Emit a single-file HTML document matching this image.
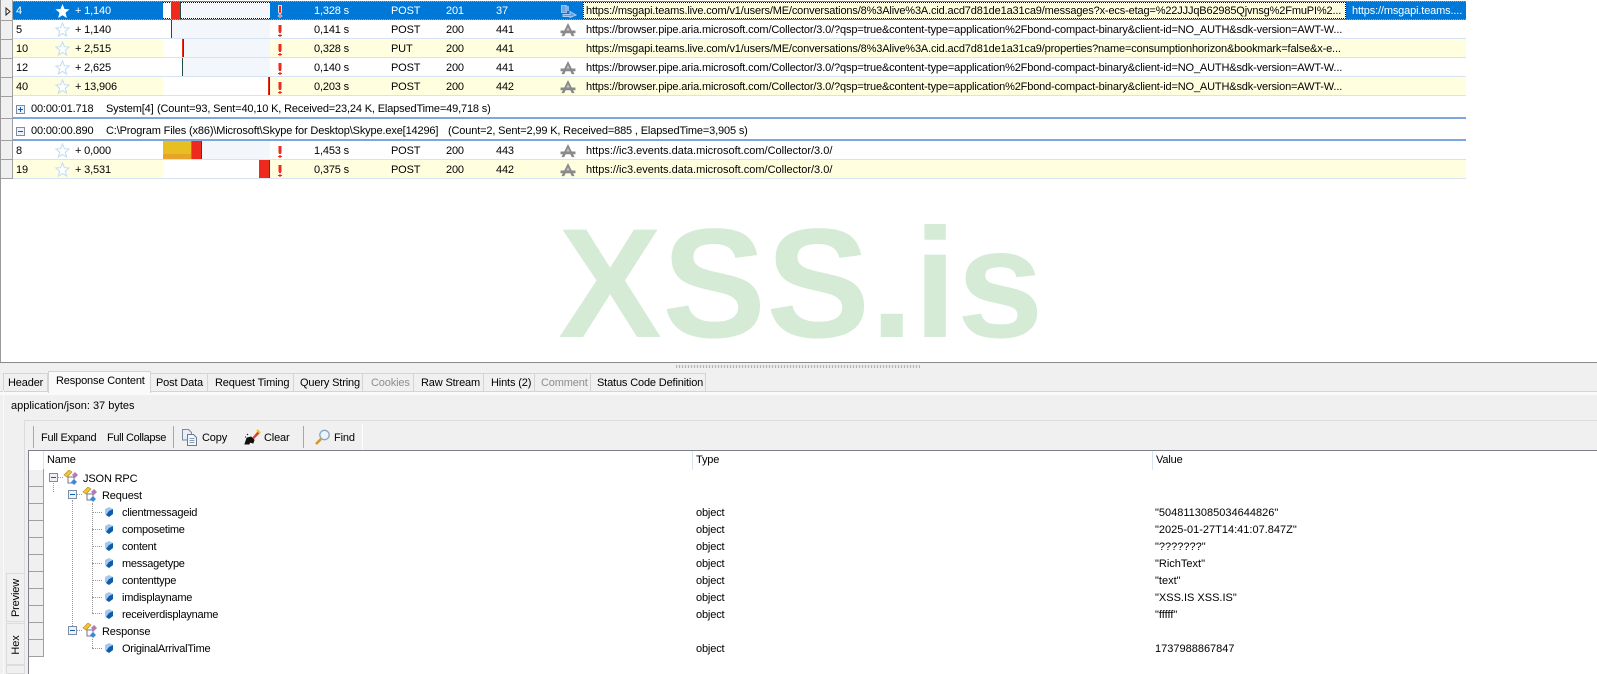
<!DOCTYPE html>
<html><head><meta charset="utf-8"><style>
html,body{margin:0;padding:0;width:1597px;height:674px;overflow:hidden;background:#fff}
body{position:relative;font:11px/14px "Liberation Sans",sans-serif;color:#000;letter-spacing:-.15px}
div,span,svg{position:absolute}
span{white-space:nowrap}
.r{left:13px;width:1453px;height:19px;box-sizing:border-box;border-bottom:1px solid #d7e3f1}
.y{background:#ffffe0}
.tl{left:150px;top:0;width:107px;height:18px;background:#fff}
.bg{top:0;height:18px;background:#f3f7fc}
.s{top:3px}
.c{height:18px;top:0}
.g{left:1px;width:11px;height:1px;background:#a0a0a0}
.tab{top:373px;height:18px;background:#f0f0f0;border-right:1px solid #d4d4d4;border-top:1px solid #d4d4d4;box-sizing:border-box}
.tt{top:376px}
.dis{color:#8d8d8d}
.cell{left:29px;width:14px;height:16px;background:#f0f0f0;border-bottom:1px solid #a0a0a0}
.dv{width:0;border-left:1px dotted #999}
.dh{height:0;border-top:1px dotted #999}
.z{letter-spacing:0}
.n{letter-spacing:-.25px}
</style></head><body>
<svg width="0" height="0" style="left:0;top:0"><defs>
<symbol id="star" viewBox="0 0 16 16"><path d="M8 1l2 5 5 .4-4 3.400 1.400 5.200L8 12.200 3.600 15 5 9.800 1 6.400 6 6z" fill="#fff" stroke="#c6def5" stroke-width="1.200"/></symbol>
<symbol id="ex" viewBox="0 0 6 12"><path d="M1.500 0h3v6L4 8H2L1.500 6z" fill="#ee2a1e"/><path d="M2.400 9h1.200v1H5v1H3.600v1H2.400v-1H1v-1h1.400z" fill="#ee2a1e"/></symbol>
<symbol id="ap" viewBox="0 0 16 15"><path d="M8 0l2 4 2 4h4v3h-2.500L15 14h-3l-1.500-3h-5L4 14H1l1.500-3H0V8h4l2-4z" fill="#8a8a8a"/><path d="M8 4.500L6.300 8h3.400z" fill="#c8c8c8"/></symbol>
<symbol id="tr" viewBox="0 0 16 16"><path d="M1 5l5-5 3 2-5 5z" fill="#f2c533" stroke="#b8922a" stroke-width=".7"/><path d="M5 7h6v6H5z" fill="none" stroke="#778" stroke-width="1"/><path d="M12 2l3 3-3 3-3-3z" fill="#b878b8"/><path d="M11 9l3 3-3 3-3-3z" fill="#3a8ad8"/></symbol>
<symbol id="cu" viewBox="0 0 10 11"><path d="M5 0l4 2v5l-4 3-4-3V2z" fill="#a4c9ee"/><path d="M5 4l4-2v5l-4 3-3-2z" fill="#0e5cab"/></symbol>
<symbol id="mn" viewBox="0 0 9 9"><rect x=".5" y=".5" width="8" height="8" fill="#eef2f7" stroke="#7d8ca0"/><path d="M2 4h5v1H2z" fill="#0b5cb5"/></symbol>
</defs></svg>

<!-- list gutter -->
<div style="left:0;top:0;width:1px;height:362px;background:#9a9a9a"></div>
<div style="left:1px;top:0;width:11px;height:179px;background:#f0f0f0"></div>
<div style="left:12px;top:0;width:1px;height:179px;background:#a0a0a0"></div>
<div class="g" style="top:20px"></div><div class="g" style="top:39px"></div><div class="g" style="top:58px"></div><div class="g" style="top:77px"></div><div class="g" style="top:96px"></div><div class="g" style="top:118px"></div><div class="g" style="top:140px"></div><div class="g" style="top:159px"></div><div class="g" style="top:178px"></div>
<svg style="left:5px;top:7px" width="6" height="9"><path d="M1 1l4 3.500L1 8z" fill="#fff" stroke="#222"/></svg>

<!-- row 4 -->
<div class="r" style="top:1px;height:19px;background:#0078d7;border-bottom:1px dotted #e8913a;border-top:1px dotted #e8913a">
<div class="tl" style="top:0;height:17px;border-top:1px dotted #000;border-bottom:1px dotted #000;box-sizing:border-box"></div>
<div class="bg" style="left:169px;width:88px;height:15px;top:1px"></div>
<div class="c" style="left:158px;width:9px;background:#ee2a1e;height:17px"></div>
<div class="c" style="left:167px;width:1px;background:#1f4e46;height:17px"></div>
<div style="left:570px;top:0;width:763px;height:17px;background:#ffffe0;border:1px dotted #000;box-sizing:border-box"></div>
<span class="s" style="left:3px;top:2px;color:#fff">4</span>
<svg style="left:42px;top:1px" width="15" height="15"><path d="M7.500 1l2 5 5 .4-4 3.400 1.400 5.200-4.400-2.800L3.100 15l1.400-5.200-4-3.400 5-.4z" fill="#fff"/></svg>
<span class="s" style="left:62px;top:2px;color:#fff">+ 1,140</span>
<svg style="left:263px;top:3px" width="8" height="13"><g transform="translate(1 .5)"><path d="M1.500 0h3v6L4 8H2L1.500 6z" fill="#ee2a1e" stroke="#fff" stroke-width=".8"/><path d="M2.400 9h1.200v1H5v1H3.600v1H2.400v-1H1v-1h1.400z" fill="#ee2a1e" stroke="#fff" stroke-width=".5"/></g></svg>
<span class="s" style="left:301px;top:2px;color:#fff">1,328 s</span>
<span class="s" style="left:378px;top:2px;color:#fff">POST</span>
<span class="s" style="left:433px;top:2px;color:#fff">201</span>
<span class="s" style="left:483px;top:2px;color:#fff">37</span>
<svg style="left:548px;top:3px" width="16" height="13"><path d="M.5.500h5v7h-5z" fill="#6ea6e6" stroke="#9cc3f0"/><path d="M2 9.500h7V6.500l6 3.500-6 2.500v-1H2z" fill="#5f9be0" stroke="#a9cdf5"/><path d="M4 1h4v5H4z" fill="#85b5ec"/></svg>
<span class="s" style="left:573px;top:2px">https://msgapi.teams.live.com/v1/users/ME/conversations/8%3Alive%3A.cid.acd7d81de1a31ca9/messages?x-ecs-etag=%22JJJqB62985Qjvnsg%2FmuPI%2...</span>
<span class="s" style="left:1339px;top:2px;color:#fff">https://msgapi.teams....</span>
</div>

<!-- row 5 -->
<div class="r" style="top:20px">
<div class="bg" style="left:159px;width:98px"></div><div class="c" style="left:158px;width:1px;background:#1f4e46"></div>
<span class="s" style="left:3px">5</span><svg style="left:42px;top:2px" width="15" height="15"><use href="#star"/></svg><span class="s" style="left:62px">+ 1,140</span>
<svg style="left:264px;top:5px" width="6" height="12"><use href="#ex"/></svg>
<span class="s" style="left:301px">0,141 s</span><span class="s" style="left:378px">POST</span><span class="s" style="left:433px">200</span><span class="s" style="left:483px">441</span>
<svg style="left:547px;top:3px" width="16" height="14"><use href="#ap"/></svg>
<span class="s" style="left:573px">https://browser.pipe.aria.microsoft.com/Collector/3.0/?qsp=true&amp;content-type=application%2Fbond-compact-binary&amp;client-id=NO_AUTH&amp;sdk-version=AWT-W...</span>
</div>

<!-- row 10 -->
<div class="r y" style="top:39px"><div class="tl"></div>
<div class="bg" style="left:171px;width:86px"></div><div class="c" style="left:169px;width:1px;background:#ee2a1e"></div><div class="c" style="left:170px;width:1px;background:#1f4e46"></div>
<span class="s" style="left:3px">10</span><svg style="left:42px;top:2px" width="15" height="15"><use href="#star"/></svg><span class="s" style="left:62px">+ 2,515</span>
<svg style="left:264px;top:5px" width="6" height="12"><use href="#ex"/></svg>
<span class="s" style="left:301px">0,328 s</span><span class="s" style="left:378px">PUT</span><span class="s" style="left:433px">200</span><span class="s" style="left:483px">441</span>
<span class="s" style="left:573px">https://msgapi.teams.live.com/v1/users/ME/conversations/8%3Alive%3A.cid.acd7d81de1a31ca9/properties?name=consumptionhorizon&amp;bookmark=false&amp;x-e...</span>
</div>

<!-- row 12 -->
<div class="r" style="top:58px">
<div class="bg" style="left:170px;width:87px"></div><div class="c" style="left:169px;width:1px;background:#1f4e46"></div>
<span class="s" style="left:3px">12</span><svg style="left:42px;top:2px" width="15" height="15"><use href="#star"/></svg><span class="s" style="left:62px">+ 2,625</span>
<svg style="left:264px;top:5px" width="6" height="12"><use href="#ex"/></svg>
<span class="s" style="left:301px">0,140 s</span><span class="s" style="left:378px">POST</span><span class="s" style="left:433px">200</span><span class="s" style="left:483px">441</span>
<svg style="left:547px;top:3px" width="16" height="14"><use href="#ap"/></svg>
<span class="s" style="left:573px">https://browser.pipe.aria.microsoft.com/Collector/3.0/?qsp=true&amp;content-type=application%2Fbond-compact-binary&amp;client-id=NO_AUTH&amp;sdk-version=AWT-W...</span>
</div>

<!-- row 40 -->
<div class="r y" style="top:77px"><div class="tl"></div>
<div class="c" style="left:255px;width:1px;background:#ee2a1e"></div><div class="c" style="left:256px;width:1px;background:#1f4e46"></div>
<span class="s" style="left:3px">40</span><svg style="left:42px;top:2px" width="15" height="15"><use href="#star"/></svg><span class="s" style="left:62px">+ 13,906</span>
<svg style="left:264px;top:5px" width="6" height="12"><use href="#ex"/></svg>
<span class="s" style="left:301px">0,203 s</span><span class="s" style="left:378px">POST</span><span class="s" style="left:433px">200</span><span class="s" style="left:483px">442</span>
<svg style="left:547px;top:3px" width="16" height="14"><use href="#ap"/></svg>
<span class="s" style="left:573px">https://browser.pipe.aria.microsoft.com/Collector/3.0/?qsp=true&amp;content-type=application%2Fbond-compact-binary&amp;client-id=NO_AUTH&amp;sdk-version=AWT-W...</span>
</div>

<!-- groups -->
<svg style="left:16px;top:105px" width="9" height="9"><use href="#mn"/><path d="M4 2h1v5H4z" fill="#0b5cb5"/></svg>
<span style="left:31px;top:102px">00:00:01.718</span><span style="left:106px;top:102px">System[4]</span><span style="left:157px;top:102px">(Count=93, Sent=40,10 K, Received=23,24 K, ElapsedTime=49,718 s)</span>
<div style="left:13px;top:117px;width:1453px;height:2px;background:#7da6de"></div>
<svg style="left:16px;top:127px" width="9" height="9"><use href="#mn"/></svg>
<span style="left:31px;top:124px">00:00:00.890</span><span style="left:106px;top:124px">C:\Program Files (x86)\Microsoft\Skype for Desktop\Skype.exe[14296]</span><span style="left:448px;top:124px">(Count=2, Sent=2,99 K, Received=885 , ElapsedTime=3,905 s)</span>
<div style="left:13px;top:139px;width:1453px;height:2px;background:#7da6de"></div>

<!-- row 8 -->
<div class="r" style="top:141px">
<div class="bg" style="left:189px;width:68px"></div>
<div class="c" style="left:150px;width:28px;background:#e8bf22"></div><div class="c" style="left:150px;top:13px;height:5px;width:28px;background:#e8a42a"></div>
<div class="c" style="left:178px;width:1px;background:#6a9a3a"></div><div class="c" style="left:179px;width:9px;background:#ee2a1e"></div><div class="c" style="left:188px;width:1px;background:#1f4e46"></div>
<span class="s" style="left:3px">8</span><svg style="left:42px;top:2px" width="15" height="15"><use href="#star"/></svg><span class="s" style="left:62px">+ 0,000</span>
<svg style="left:264px;top:5px" width="6" height="12"><use href="#ex"/></svg>
<span class="s" style="left:301px">1,453 s</span><span class="s" style="left:378px">POST</span><span class="s" style="left:433px">200</span><span class="s" style="left:483px">443</span>
<svg style="left:547px;top:3px" width="16" height="14"><use href="#ap"/></svg>
<span class="s z" style="left:573px">https://ic3.events.data.microsoft.com/Collector/3.0/</span>
</div>

<!-- row 19 -->
<div class="r y" style="top:160px"><div class="tl"></div>
<div class="c" style="left:246px;width:10px;background:#ee2a1e"></div><div class="c" style="left:256px;width:1px;background:#1f4e46"></div>
<span class="s" style="left:3px">19</span><svg style="left:42px;top:2px" width="15" height="15"><use href="#star"/></svg><span class="s" style="left:62px">+ 3,531</span>
<svg style="left:264px;top:5px" width="6" height="12"><use href="#ex"/></svg>
<span class="s" style="left:301px">0,375 s</span><span class="s" style="left:378px">POST</span><span class="s" style="left:433px">200</span><span class="s" style="left:483px">442</span>
<svg style="left:547px;top:3px" width="16" height="14"><use href="#ap"/></svg>
<span class="s z" style="left:573px">https://ic3.events.data.microsoft.com/Collector/3.0/</span>
</div>

<!-- watermark -->
<svg style="left:0;top:200px;letter-spacing:0" width="1597" height="160"><text x="558" y="137" font-family="Liberation Sans" font-weight="700" font-size="156" fill="#d5ebd6">XSS.is</text></svg>

<!-- lower panel -->
<div style="left:0;top:362px;width:1597px;height:312px;background:#f0f0f0"></div>
<div style="left:0;top:362px;width:1597px;height:1px;background:#8a8a90"></div>
<div style="left:676px;top:365px;width:244px;height:3px;background:repeating-linear-gradient(90deg,#b4b4b4 0 1px,#e8e8e8 1px 3px)"></div>

<!-- tabs -->
<div style="left:0;top:391px;width:1597px;height:4px;background:#fafafa;border-top:1px solid #d4d4d4;box-sizing:border-box"></div>
<div style="left:3px;top:391px;width:1px;height:283px;background:#fafafa"></div>
<div class="tab" style="left:3px;width:45px;border-left:1px solid #d4d4d4"></div>
<div class="tab" style="left:151px;width:57px"></div>
<div class="tab" style="left:208px;width:86px"></div>
<div class="tab" style="left:294px;width:69px"></div>
<div class="tab" style="left:363px;width:51px"></div>
<div class="tab" style="left:414px;width:70px"></div>
<div class="tab" style="left:484px;width:51px"></div>
<div class="tab" style="left:535px;width:56px"></div>
<div class="tab" style="left:591px;width:115px"></div>
<div style="left:48px;top:371px;width:103px;height:22px;background:#fafafa;border:1px solid #d4d4d4;border-bottom:0;box-sizing:border-box"></div>
<span class="tt" style="left:8px">Header</span>
<span style="left:56px;top:374px">Response Content</span>
<span class="tt" style="left:156px">Post Data</span>
<span class="tt" style="left:215px">Request Timing</span>
<span class="tt" style="left:300px">Query String</span>
<span class="tt dis" style="left:371px">Cookies</span>
<span class="tt" style="left:421px">Raw Stream</span>
<span class="tt" style="left:491px">Hints (2)</span>
<span class="tt dis" style="left:541px">Comment</span>
<span class="tt" style="left:597px">Status Code Definition</span>

<span class="z" style="left:11px;top:399px">application/json: 37 bytes</span>

<!-- toolbar -->
<div style="left:24px;top:420px;width:1573px;height:1px;background:#dcdcdc"></div>
<div style="left:24px;top:420px;width:1px;height:254px;background:#dcdcdc"></div>
<div style="left:33px;top:426px;width:1px;height:22px;background:#a8a8a8"></div>
<div style="left:173px;top:426px;width:1px;height:22px;background:#a8a8a8"></div>
<div style="left:303px;top:426px;width:1px;height:22px;background:#a8a8a8"></div>
<div style="left:362px;top:424px;width:1px;height:26px;background:#fff"></div>
<span style="left:41px;top:431px;letter-spacing:-.25px">Full Expand</span>
<span style="left:107px;top:431px;letter-spacing:-.35px">Full Collapse</span>
<svg style="left:182px;top:429px" width="16" height="17"><path d="M.5.500h6l3 3V11H.5z" fill="#e8eef5" stroke="#7a8a9c"/><path d="M5.500 5.500h6l3 3v8h-9z" fill="#f4f7fb" stroke="#6a7a8c"/><path d="M7.500 9.500h5M7.500 11.500h5M7.500 13.500h5" stroke="#8aa0b8"/></svg>
<span style="left:202px;top:431px">Copy</span>
<svg style="left:244px;top:429px" width="17" height="17"><path d="M8 9L14 2l2 2-6 6z" fill="#e83a28"/><path d="M13 1l3 3" stroke="#e8c020" stroke-width="2"/><path d="M1 15l2-6 4-1 3 3-1 3-3-1-1 2zM3 5l1 1M1 8l1 0" fill="#111" stroke="#111"/></svg>
<span style="left:264px;top:431px">Clear</span>
<svg style="left:314px;top:429px" width="17" height="17"><circle cx="10.500" cy="6" r="4.700" fill="#eaf4fc" stroke="#8aa4bc" stroke-width="1.300"/><path d="M7 10l-5 5" stroke="#d8962a" stroke-width="2.600"/></svg>
<span style="left:334px;top:431px">Find</span>

<!-- tree area -->
<div style="left:28px;top:450px;width:1569px;height:224px;background:#fff;border-top:1px solid #80808a;border-left:1px solid #80808a;box-sizing:border-box"></div>
<div class="cell" style="top:470px"></div><div class="cell" style="top:487px"></div><div class="cell" style="top:504px"></div><div class="cell" style="top:521px"></div><div class="cell" style="top:538px"></div><div class="cell" style="top:555px"></div><div class="cell" style="top:572px"></div><div class="cell" style="top:589px"></div><div class="cell" style="top:606px"></div><div class="cell" style="top:623px"></div><div class="cell" style="top:640px"></div>
<div style="left:43px;top:451px;width:1px;height:206px;background:#a0a0a0"></div>
<div style="left:43px;top:451px;width:1px;height:18px;background:#d7e3f1"></div>
<div style="left:692px;top:451px;width:1px;height:19px;background:#d7e3f1"></div>
<div style="left:1152px;top:451px;width:1px;height:19px;background:#d7e3f1"></div>
<span style="left:47px;top:453px">Name</span><span style="left:696px;top:453px">Type</span><span style="left:1156px;top:453px">Value</span>

<!-- tree lines -->
<div class="dv" style="left:53px;top:483px;height:9px"></div>
<div class="dh" style="left:58px;top:477px;width:5px"></div>
<div class="dv" style="left:72px;top:500px;height:126px"></div>
<div class="dh" style="left:77px;top:494px;width:5px"></div>
<div class="dh" style="left:77px;top:630px;width:5px"></div>
<div class="dv" style="left:92px;top:503px;height:110px"></div>
<div class="dv" style="left:92px;top:639px;height:9px"></div>
<div class="dh" style="left:92px;top:512px;width:10px"></div><div class="dh" style="left:92px;top:529px;width:10px"></div><div class="dh" style="left:92px;top:546px;width:10px"></div><div class="dh" style="left:92px;top:563px;width:10px"></div><div class="dh" style="left:92px;top:580px;width:10px"></div><div class="dh" style="left:92px;top:597px;width:10px"></div><div class="dh" style="left:92px;top:613px;width:10px"></div><div class="dh" style="left:92px;top:648px;width:10px"></div>

<svg style="left:49px;top:473px" width="9" height="9"><use href="#mn"/></svg>
<svg style="left:63px;top:470px" width="16" height="16"><use href="#tr"/></svg>
<span style="left:83px;top:472px">JSON RPC</span>
<svg style="left:68px;top:490px" width="9" height="9"><use href="#mn"/></svg>
<svg style="left:82px;top:487px" width="16" height="16"><use href="#tr"/></svg>
<span style="left:102px;top:489px">Request</span>
<svg style="left:68px;top:626px" width="9" height="9"><use href="#mn"/></svg>
<svg style="left:82px;top:623px" width="16" height="16"><use href="#tr"/></svg>
<span style="left:102px;top:625px">Response</span>

<svg style="left:104px;top:507px" width="10" height="11"><use href="#cu"/></svg><span class="n" style="left:122px;top:506px">clientmessageid</span><span style="left:696px;top:506px">object</span><span class="z" style="left:1155px;top:506px">"5048113085034644826"</span>
<svg style="left:104px;top:524px" width="10" height="11"><use href="#cu"/></svg><span class="n" style="left:122px;top:523px">composetime</span><span style="left:696px;top:523px">object</span><span class="z" style="left:1155px;top:523px">"2025-01-27T14:41:07.847Z"</span>
<svg style="left:104px;top:541px" width="10" height="11"><use href="#cu"/></svg><span class="n" style="left:122px;top:540px">content</span><span style="left:696px;top:540px">object</span><span class="z" style="left:1155px;top:540px">"???????"</span>
<svg style="left:104px;top:558px" width="10" height="11"><use href="#cu"/></svg><span class="n" style="left:122px;top:557px">messagetype</span><span style="left:696px;top:557px">object</span><span class="z" style="left:1155px;top:557px">"RichText"</span>
<svg style="left:104px;top:575px" width="10" height="11"><use href="#cu"/></svg><span class="n" style="left:122px;top:574px">contenttype</span><span style="left:696px;top:574px">object</span><span class="z" style="left:1155px;top:574px">"text"</span>
<svg style="left:104px;top:592px" width="10" height="11"><use href="#cu"/></svg><span class="n" style="left:122px;top:591px">imdisplayname</span><span style="left:696px;top:591px">object</span><span class="z" style="left:1155px;top:591px">"XSS.IS XSS.IS"</span>
<svg style="left:104px;top:609px" width="10" height="11"><use href="#cu"/></svg><span class="n" style="left:122px;top:608px">receiverdisplayname</span><span style="left:696px;top:608px">object</span><span class="z" style="left:1155px;top:608px">"fffff"</span>
<svg style="left:104px;top:643px" width="10" height="11"><use href="#cu"/></svg><span class="n" style="left:122px;top:642px">OriginalArrivalTime</span><span style="left:696px;top:642px">object</span><span class="z" style="left:1155px;top:642px">1737988867847</span>

<!-- side tabs -->
<div style="left:6px;top:573px;width:18px;height:49px;border:1px solid #dcdcdc;border-right:0;box-sizing:border-box"></div>
<div style="left:6px;top:623px;width:18px;height:42px;border:1px solid #dcdcdc;border-right:0;box-sizing:border-box"></div>
<div style="left:6px;top:665px;width:18px;height:9px;border:1px solid #dcdcdc;border-right:0;box-sizing:border-box"></div>
<span style="left:16px;top:598px;transform:translate(-50%,-50%) rotate(-90deg)">Preview</span>
<span style="left:16px;top:645px;transform:translate(-50%,-50%) rotate(-90deg)">Hex</span>
</body></html>
